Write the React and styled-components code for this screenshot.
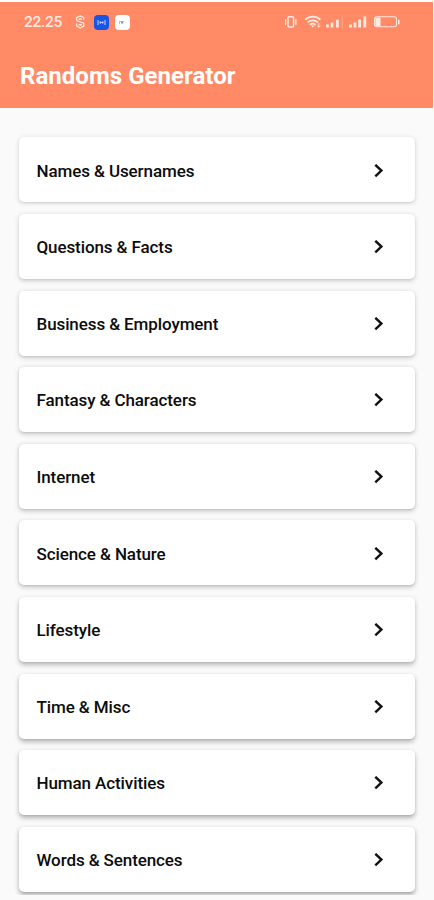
import React from 'react';
import styled, { createGlobalStyle } from 'styled-components';

const GlobalStyle = createGlobalStyle`
    * {
        box-sizing: border-box;
    }

    body {
        margin: 0;
        background: #fafafa;
        font-family: Roboto, "Liberation Sans", sans-serif;
    }
`;

const Screen = styled.div`
    display: flex;
    flex-direction: column;
    height: 900px;
    overflow: hidden;
    background: #fafafa;
`;

const Header = styled.header`
    height: 108px;
    flex: none;
    border-top: 2px solid #fff;
    border-right: 1px solid #fff;
    background: #ff8a65;
    color: #fff;
`;

const StatusBar = styled.div`
    display: flex;
    justify-content: space-between;
    align-items: center;
    height: 40px;
    padding: 0 32px 0 24px;
    color: #ffe9e1;
`;

const StatusGroup = styled.div`
    display: flex;
    align-items: center;
`;

const Clock = styled.span`
    width: 51px;
    font-size: 15.5px;
    line-height: 20px;
    font-weight: 500;
    letter-spacing: -0.3px;
`;

const AppBadge = styled.span`
    display: flex;
    align-items: center;
    justify-content: center;
    width: 15px;
    height: 15px;
    margin-left: ${({ $gap }) => $gap}px;
    border-radius: 4px;
    background: ${({ $color }) => $color};
`;

const Title = styled.h1`
    margin: 18px 0 0 20px;
    font-size: 24px;
    line-height: 32px;
    font-weight: 700;
    letter-spacing: 0.04px;
`;

const List = styled.main`
    display: flex;
    flex-direction: column;
    gap: 11.6px;
    height: 787px;
    padding: 29.4px 19px 0;
    overflow: hidden;
`;

const Card = styled.div`
    display: flex;
    flex: none;
    align-items: center;
    justify-content: space-between;
    height: 65px;
    padding: 1.4px 31px 0 17.5px;
    border-radius: 5px;
    background: #fff;
    box-shadow: 0 ${({ $depth }) => 1 + $depth * 0.2}px 5px rgba(0, 0, 0, ${({ $depth }) => 0.16 + $depth * 0.016}),
        0 1px 2px rgba(0, 0, 0, 0.07);
`;

const Label = styled.span`
    color: #0c0c0c;
    font-size: 17px;
    line-height: 22px;
    font-weight: 500;
    letter-spacing: -0.1px;
`;

const categories = [
    'Names & Usernames',
    'Questions & Facts',
    'Business & Employment',
    'Fantasy & Characters',
    'Internet',
    'Science & Nature',
    'Lifestyle',
    'Time & Misc',
    'Human Activities',
    'Words & Sentences',
];

const Chevron = () => (
    <svg width="10" height="14" viewBox="0 0 10 14" fill="none" stroke="#111" strokeWidth="2.4">
        <path d="M1.3 .8 7.4 6.6 1.3 12.4" />
    </svg>
);

const ShieldIcon = () => (
    <svg width="11" height="14" viewBox="0 0 11 14" fill="none" stroke="currentColor" strokeWidth="1.3">
        <path d="M8.8 5V2.6L5.2 1 1.6 2.6v3L8.8 8.2v2.6L5.2 13 1.6 10.8V8.4" />
        <path d="M7 4.6 5.2 3.8 3.6 4.6M3.6 9.4l1.6.8 1.6-.8" />
    </svg>
);

const SignalBadgeIcon = () => (
    <svg width="11" height="9" viewBox="0 0 11 9" fill="none" stroke="#b9ceff" strokeWidth="1.1">
        <path d="M2 2v5M9 2v5M3.5 4.5h4M4.2 3.2v2.6M6.8 3.2v2.6" />
    </svg>
);

const CardBadgeIcon = () => (
    <svg width="9" height="7" viewBox="0 0 9 7">
        <path d="M1 2h5v1H2v2H1z" fill="#c2c2c6" />
        <path d="M3 2.7h2.3v1.8H3z" fill="#92929a" />
    </svg>
);

/* vibrate, wifi, two signal meters and the battery */
const StatusIcons = () => (
    <svg width="117" height="16" viewBox="0 0 117 16" fill="none" stroke="currentColor">
        <rect x="4" y="2.7" width="5.6" height="10.2" rx="1" strokeWidth="1.5" />
        <path d="M1.7 5v6M11.9 5v6" strokeWidth="1.2" />
        <path d="M21.2 5.7c4.4-4.1 10.8-4.1 15.2 0M23.6 8.4c3-2.8 7.4-2.8 10.4 0M26 10.9c1.7-1.5 3.9-1.5 5.6 0" strokeWidth="1.8" />
        <path d="M27 11.6h3.6l-1.8 2z" fill="currentColor" stroke="none" />
        <path d="M34.8 9v4.2M33.2 11.6l1.6 1.6 1.6-1.6" strokeWidth=".9" />
        <path d="M43.5 10.4v3M48 8.6v4.8M53.4 5.8v7.6" strokeWidth="2.7" />
        <path d="M58.2 2v11.6" strokeWidth=".8" opacity=".35" />
        <path d="M66.5 10.4v3M71 8.4v5M75.6 5.6v7.8M80.8 2.6v10.8" strokeWidth="2.8" />
        <rect x="90.5" y="2.8" width="22" height="10" rx="2.2" strokeWidth="1.1" />
        <path d="M114.8 5.8v4.4" strokeWidth="1.5" />
        <rect x="91.3" y="3.6" width="5.2" height="8.4" fill="currentColor" stroke="none" />
    </svg>
);

const App = () => {
    return (
        <Screen>
            <GlobalStyle />
            <Header>
                <StatusBar>
                    <StatusGroup>
                        <Clock>22.25</Clock>
                        <ShieldIcon />
                        <AppBadge $color="#1855e6" $gap={8}>
                            <SignalBadgeIcon />
                        </AppBadge>
                        <AppBadge $color="#fff" $gap={6}>
                            <CardBadgeIcon />
                        </AppBadge>
                    </StatusGroup>
                    <StatusIcons />
                </StatusBar>
                <Title>Randoms Generator</Title>
            </Header>
            <List>
                {categories.map((name, index) => (
                    <Card key={name} $depth={index}>
                        <Label>{name}</Label>
                        <Chevron />
                    </Card>
                ))}
            </List>
        </Screen>
    );
};

export default App;
